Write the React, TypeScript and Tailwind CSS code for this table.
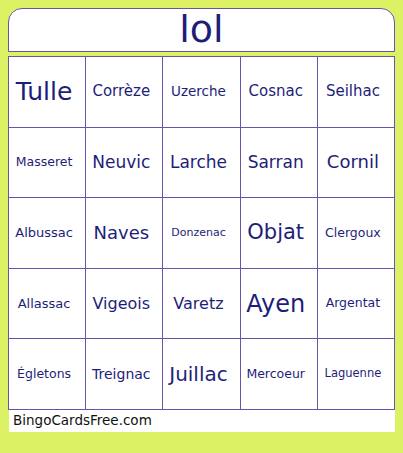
const cells: { t: string; s: string }[] = [
  { t: "Tulle", s: "text-[25px]" },
  { t: "Corrèze", s: "text-[15px]" },
  { t: "Uzerche", s: "text-[13.5px]" },
  { t: "Cosnac", s: "text-[15px]" },
  { t: "Seilhac", s: "text-[15px]" },
  { t: "Masseret", s: "text-[12.5px]" },
  { t: "Neuvic", s: "text-[17px]" },
  { t: "Larche", s: "text-[17px]" },
  { t: "Sarran", s: "text-[17px]" },
  { t: "Cornil", s: "text-[18px]" },
  { t: "Albussac", s: "text-[13px]" },
  { t: "Naves", s: "text-[18px]" },
  { t: "Donzenac", s: "text-[11px]" },
  { t: "Objat", s: "text-[21px]" },
  { t: "Clergoux", s: "text-[12.5px]" },
  { t: "Allassac", s: "text-[13px]" },
  { t: "Vigeois", s: "text-[16px]" },
  { t: "Varetz", s: "text-[16px]" },
  { t: "Ayen", s: "text-[24px]" },
  { t: "Argentat", s: "text-[12.5px]" },
  { t: "Égletons", s: "text-[12.5px]" },
  { t: "Treignac", s: "text-[14px]" },
  { t: "Juillac", s: "text-[20px]" },
  { t: "Mercoeur", s: "text-[12.5px]" },
  { t: "Laguenne", s: "text-[11.5px]" },
];

export default function App() {
  return (
    <div className="w-[403px] h-[453px] bg-[#dcf264] pt-2 pl-2 font-['DejaVu_Sans',sans-serif] text-[#1e1e78]">
      <div className="w-[387px] h-[44px] bg-white border border-[#6a52ad] rounded-t-[14px] flex items-center justify-center">
        <span className="text-[38px] leading-none -mt-[3px]">lol</span>
      </div>
      <div className="mt-[4px] w-[387px] grid grid-cols-5 border-t border-l border-[#6a52ad] bg-white">
        {cells.map((c) => (
          <div
            key={c.t}
            className="h-[70.6px] border-r border-b border-[#6a52ad] flex items-center justify-center pr-[6px] whitespace-nowrap"
          >
            <span className={c.s + " leading-none"}>{c.t}</span>
          </div>
        ))}
      </div>
      <div className="ml-px w-[386px] h-[22px] bg-white pl-[4px] pt-[2px] text-[13.5px] leading-[16px] text-[#111]">
        BingoCardsFree.com
      </div>
    </div>
  );
}
